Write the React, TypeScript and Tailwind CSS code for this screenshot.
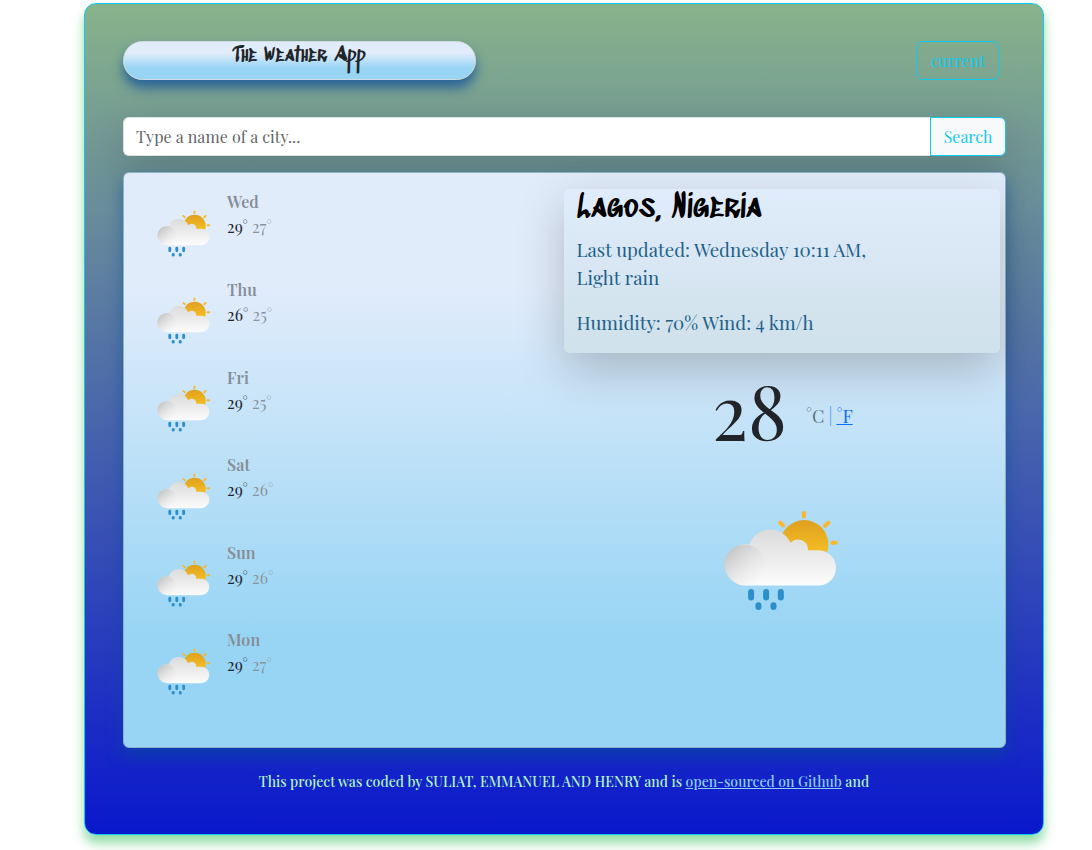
import React from "react";

function RainIcon({ id, className }: { id: string; className: string }) {
  return (
    <svg viewBox="40 30 350 302" className={className} aria-hidden="true">
      <defs>
        <linearGradient id={id + "-sun"} x1="0" y1="60" x2="0" y2="200" gradientUnits="userSpaceOnUse">
          <stop offset="0" stopColor="#dfa020" />
          <stop offset="0.75" stopColor="#f6c023" />
        </linearGradient>
        <linearGradient id={id + "-cloud"} x1="0" y1="83" x2="0" y2="256" gradientUnits="userSpaceOnUse">
          <stop offset="0" stopColor="#dadada" />
          <stop offset="1" stopColor="#fcfcfc" />
        </linearGradient>
        <linearGradient id={id + "-puff"} x1="70" y1="150" x2="150" y2="235" gradientUnits="userSpaceOnUse">
          <stop offset="0" stopColor="#c8c8c8" />
          <stop offset="1" stopColor="#f2f2f2" stopOpacity="0.3" />
        </linearGradient>
      </defs>
      <g stroke="#fbb62b" strokeWidth="12" strokeLinecap="round">
        <path d="M285 39V49M214 68L223 76M358 68L348 77M370 128H380" />
      </g>
      <circle cx="286" cy="132" r="72" fill={`url(#${id}-sun)`} />
      <path
        d="M108 256A62 62 0 1 1 122 133A66 66 0 0 1 245 128A30 30 0 0 1 297 150H328A53 53 0 0 1 328 256Z"
        fill={`url(#${id}-cloud)`}
      />
      <circle cx="108" cy="194" r="61" fill={`url(#${id}-puff)`} />
      <g fill="#2c8fca">
        <rect x="118" y="266" width="18" height="35" rx="9" />
        <rect x="163" y="266" width="18" height="35" rx="9" />
        <rect x="207" y="266" width="18" height="35" rx="9" />
        <rect x="140" y="306" width="18" height="23" rx="9" />
        <rect x="185" y="306" width="18" height="23" rx="9" />
      </g>
    </svg>
  );
}

const days = [
  { day: "Wed", max: "29", min: "27" },
  { day: "Thu", max: "26", min: "25" },
  { day: "Fri", max: "29", min: "25" },
  { day: "Sat", max: "29", min: "26" },
  { day: "Sun", max: "29", min: "26" },
  { day: "Mon", max: "29", min: "27" },
];

export default function App() {
  return (
    <div className="h-[850px] overflow-hidden bg-white pl-[84px] pt-[3px] font-['Playfair_Display','Liberation_Serif',serif] text-[#212529]">
      <main className="flex h-[832px] w-[960px] flex-col rounded-xl border border-[#0dcaf0] bg-linear-to-b/srgb from-[#88b38a] to-[#0a18cd] px-[38px] pt-[37px] shadow-[0_8px_12px_#8fdca5]">
        <header className="flex h-[39px] shrink-0 items-stretch justify-between pr-[6px]">
          <h1 className="flex w-[353px] justify-center rounded-full border border-[#d5dbe4] bg-linear-to-b/srgb from-[#e1ecfb] from-30% to-[#98d5f4] to-70% font-['Sedgwick_Ave_Display','Liberation_Sans',sans-serif] text-[20px] leading-[28px] font-medium shadow-[0_8px_12px_#2a6499]">
            <span className="whitespace-nowrap">The Weather App</span>
          </h1>
          <button className="w-[82px] rounded-md border border-[#0dcaf0] text-base text-[#0dcaf0]">
            current
          </button>
        </header>

        <form className="mt-[37px] flex h-[39px] w-[883px] shrink-0 rounded-md shadow-[0_16px_48px_rgba(0,0,0,0.2)]">
          <div className="flex flex-1 items-center rounded-l-md border border-r-0 border-[#dee2e6] bg-white pl-3 text-base tracking-[0.08px] text-[#5f6468]">
            <span className="whitespace-nowrap">Type a name of a city...</span>
          </div>
          <button type="button" className="w-[76px] rounded-r-md border border-[#0dcaf0] bg-[#f8f9fa] text-base text-[#0dcaf0]">
            Search
          </button>
        </form>

        <section className="mt-4 flex h-[576px] w-[883px] shrink-0 rounded-md border border-[#8fb0cb] bg-linear-to-b/srgb from-[#e1ecfb] from-20% to-[#98d5f4] to-80% shadow-[0_8px_16px_rgba(0,80,150,0.55)]">
          <div className="w-[440px] pt-[16.4px]">
            {days.map((d) => (
              <div key={d.day} className="flex h-[87.6px] pl-[32px]">
                <RainIcon id={d.day} className="mt-[20.4px] h-[47px] w-[55px]" />
                <div className="ml-4">
                  <div className="text-base leading-[26px] font-semibold tracking-[0.1px] text-[#858d96]">{d.day}</div>
                  <div className="text-base leading-[23px] tracking-[0.1px] whitespace-nowrap">
                    {d.max}° <span className="text-[#8b949d]">{d.min}°</span>
                  </div>
                </div>
              </div>
            ))}
          </div>

          <div className="w-[436px] pt-4">
            <div className="h-[164px] rounded-md bg-linear-to-b/srgb from-[#e0ecfb] to-[#cfe1ea] pl-[12.5px] shadow-[0_16px_48px_rgba(0,0,0,0.22)]">
              <h2 className="font-['Sedgwick_Ave_Display','Liberation_Sans',sans-serif] text-[32px] leading-[38px] font-medium tracking-[0.15px] text-black">
                <span className="whitespace-nowrap">Lagos, Nigeria</span>
              </h2>
              <p className="mt-[9px] text-[18.72px] leading-[28px] text-[#1d6189]">
                <span className="whitespace-nowrap">Last updated: Wednesday 10:11 AM,</span>
                <br />
                Light rain
              </p>
              <p className="mt-[17px] text-[18.72px] leading-[28px] whitespace-nowrap text-[#1d6189]">
                Humidity: 70% Wind: 4 km/h
              </p>
            </div>

            <div className="mt-[13px] flex h-[92px] pl-[148px]">
              <div className="w-[94px] text-[75px] leading-[86px]">28</div>
              <div className="flex pt-[36px] text-[18px] leading-7">
                <span className="text-[#5f6c7c]">°C</span>
                <span className="mx-[4px] text-[#3d93e8]">|</span>
                <a className="text-[#0d6efd] underline" href="#">
                  °F
                </a>
              </div>
            </div>
            <RainIcon id="now" className="mt-[52px] ml-[158px] h-[101px] w-[117px]" />
          </div>
        </section>

        <footer className="mt-[22px] flex justify-center text-[14px] leading-6 font-medium tracking-[0.035px] text-[#b3f3c2]">
          <p className="whitespace-nowrap">
            This project was coded by SULIAT, EMMANUEL AND HENRY and is{" "}
            <a href="#" className="text-[#8fcdf2] underline">
              open-sourced on Github
            </a>{" "}
            and
          </p>
        </footer>
      </main>
    </div>
  );
}
